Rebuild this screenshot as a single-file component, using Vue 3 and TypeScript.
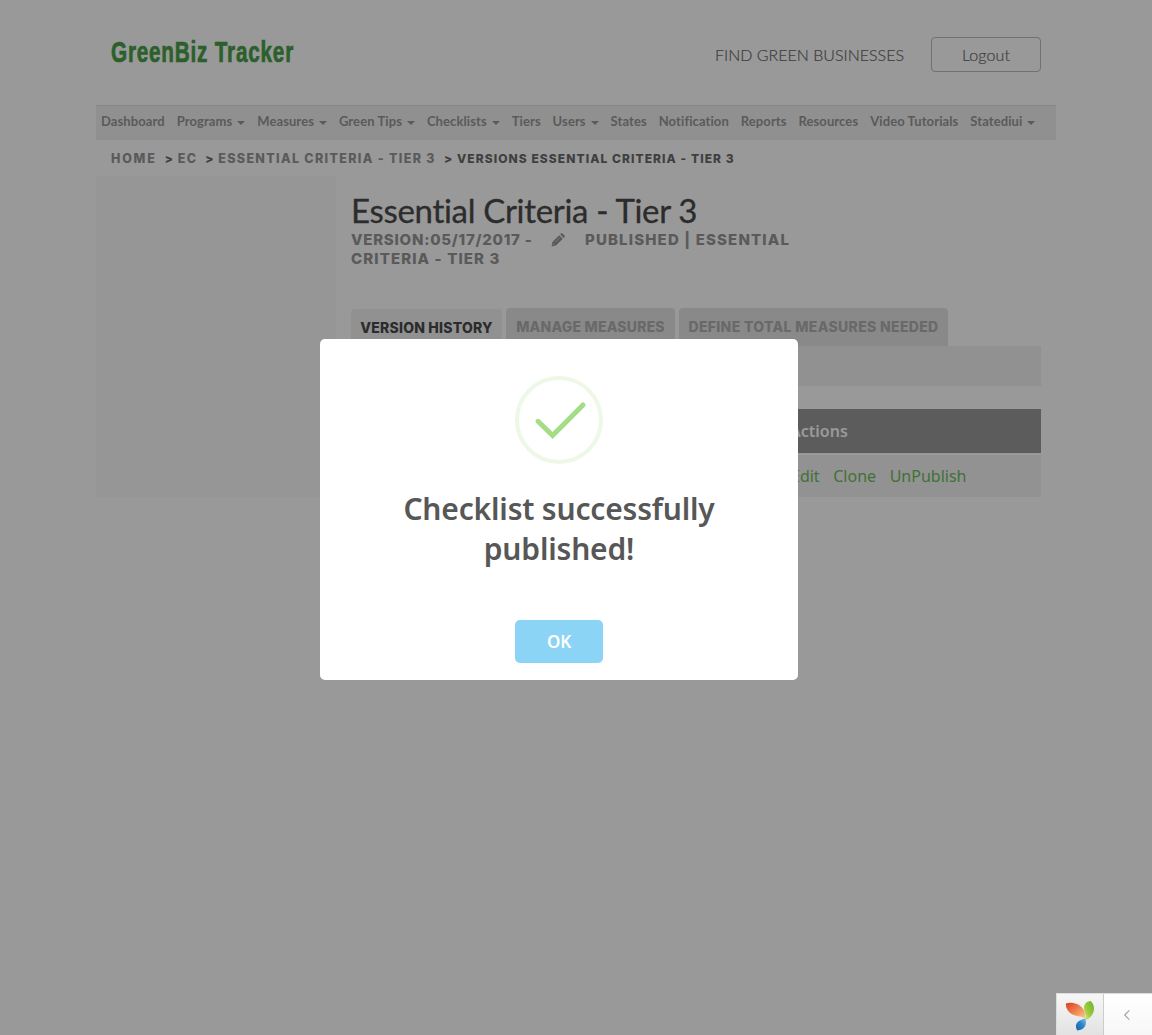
<script setup lang="ts">
interface NavItem {
  label: string
  menu?: boolean
}

const nav: NavItem[] = [
  { label: 'Dashboard' },
  { label: 'Programs', menu: true },
  { label: 'Measures', menu: true },
  { label: 'Green Tips', menu: true },
  { label: 'Checklists', menu: true },
  { label: 'Tiers' },
  { label: 'Users', menu: true },
  { label: 'States' },
  { label: 'Notification' },
  { label: 'Reports' },
  { label: 'Resources' },
  { label: 'Video Tutorials' },
  { label: 'Statediui', menu: true },
]

const crumbs: string[] = ['HOME', 'EC', 'ESSENTIAL CRITERIA - TIER 3']
const actions: string[] = ['Edit', 'Clone', 'UnPublish']
</script>

<template>
  <div class="page">
    <div class="container">
      <header class="header">
        <div class="logo"><span>GreenBiz Tracker</span></div>
        <div class="header-right">
          <a class="find">FIND GREEN BUSINESSES</a>
          <a class="logout">Logout</a>
        </div>
      </header>

      <nav class="nav">
        <a v-for="item in nav" :key="item.label" class="nav-item">
          {{ item.label }}<i v-if="item.menu" class="caret"></i>
        </a>
      </nav>

      <div class="crumbs">
        <template v-for="c in crumbs" :key="c">
          <a>{{ c }}</a><b>&gt;</b>
        </template>
        <strong>VERSIONS ESSENTIAL CRITERIA - TIER 3</strong>
      </div>

      <div class="columns">
        <aside class="side"></aside>
        <main class="main">
          <h1>Essential Criteria - Tier 3</h1>
          <div class="meta">
            <div class="meta-row">
              <span class="ver">VERSION:05/17/2017 -</span>
              <svg class="pencil" viewBox="0 0 14 14" width="14" height="14">
                <path fill="currentColor" d="M.6 13.4 1.4 9 8.2 2.2l3.6 3.6L5 12.6zM9.1 1.3l.9-.9q.7-.6 1.4 0l2.2 2.2q.6.7 0 1.4l-.9.9z" />
                <path d="M4.1 9.3 8.5 4.9M1.7 10.8l1.5 1.5" stroke="#fff" stroke-width=".5" />
              </svg>
              <span class="pub">PUBLISHED | ESSENTIAL</span>
            </div>
            <div class="meta-row second">CRITERIA - TIER 3</div>
          </div>
          <div class="tabs">
            <a class="tab active"><span>VERSION HISTORY</span></a>
            <a class="tab manage"><span>MANAGE MEASURES</span></a>
            <a class="tab define"><span>DEFINE TOTAL MEASURES NEEDED</span></a>
          </div>
          <div class="panel"></div>
          <div class="thead"><span>Actions</span></div>
          <div class="trow">
            <a v-for="a in actions" :key="a">{{ a }}</a>
          </div>
        </main>
      </div>
    </div>

    <div class="overlay"></div>

    <div class="modal">
      <svg class="check" viewBox="0 0 88 88" width="88" height="88">
        <circle cx="44" cy="44" r="42" fill="none" stroke="#edf8e7" stroke-width="4" />
        <path d="M23 45.3 37.6 59.5 68 29" fill="none" stroke="#a5dc86" stroke-width="5" stroke-linecap="round" />
      </svg>
      <h2>Checklist successfully<br />published!</h2>
      <button class="ok">OK</button>
    </div>

    <div class="debug">
      <div class="yii">
        <svg viewBox="0 0 30 32" width="30" height="32">
          <defs>
            <linearGradient id="yo" x1="0" y1="0" x2="1" y2="1">
              <stop offset="0" stop-color="#dc3b20" />
              <stop offset=".5" stop-color="#ee8452" />
              <stop offset="1" stop-color="#fbd58c" />
            </linearGradient>
            <linearGradient id="yg" x1="1" y1="0" x2="0" y2="1">
              <stop offset="0" stop-color="#68b22f" />
              <stop offset=".6" stop-color="#a0cc3d" />
              <stop offset="1" stop-color="#e6eda0" />
            </linearGradient>
            <linearGradient id="yb" x1="1" y1="0" x2="0" y2="1">
              <stop offset="0" stop-color="#7cc3ea" />
              <stop offset=".45" stop-color="#2c86cb" />
              <stop offset="1" stop-color="#1762a8" />
            </linearGradient>
          </defs>
          <path fill="url(#yg)" d="M25.8 1C31 6.5 30.2 15 21 20.3q.3-4.3-1.6-8.8C17.8 5.5 20.5 1.5 25.8 1Z" />
          <path fill="url(#yo)" d="M.9 3.6C5.5 1.6 14.5 2.8 18.5 9.5q2.2 4 2.2 9.8C17 15.6 12 16.8 7 14.2 2.5 11.5.6 7.5.9 3.6Z" />
          <path fill="url(#yb)" d="M20.6 18.6C22 24.5 20 30 12.2 30.6 8.2 23.5 14 19.8 20.6 18.6Z" />
        </svg>
      </div>
      <div class="toggle">
        <svg viewBox="0 0 8 12" width="8" height="12">
          <path d="M6.3 1.3 1.7 6l4.6 4.7" fill="none" stroke="#a0a0a0" stroke-width="1.1" />
        </svg>
      </div>
    </div>
  </div>
</template>

<style>
body {
  margin: 0;
  background: #fff;
}
</style>

<style scoped>
.page {
  position: relative;
  height: 1035px;
  overflow: hidden;
  font-family: Lato, sans-serif;
}
.container {
  width: 960px;
  margin: 0 auto;
}
.header {
  box-sizing: border-box;
  height: 105px;
  padding: 37px 15px 0;
  display: flex;
  justify-content: space-between;
}
.logo {
  width: 184px;
  height: 30px;
  color: #48a048;
  font: 700 30px/30px 'Liberation Sans', sans-serif;
  white-space: nowrap;
}
.logo span {
  display: inline-block;
  letter-spacing: 1.15px;
  transform: scaleX(0.69);
  transform-origin: 0 50%;
  -webkit-text-stroke: 0.7px #48a048;
}
.header-right {
  display: flex;
}
.find {
  font-weight: 300;
  font-size: 16px;
  line-height: 36px;
  color: #6a6a6a;
  margin-right: 27px;
  -webkit-text-stroke: 0.2px #6a6a6a;
}
.logout {
  box-sizing: border-box;
  width: 110px;
  height: 35px;
  border: 1px solid #bbb;
  border-radius: 4px;
  text-align: center;
  font-size: 16px;
  font-weight: 300;
  letter-spacing: 0.1px;
  line-height: 34px;
  color: #6a6a6a;
  -webkit-text-stroke: 0.2px #6a6a6a;
}
.nav {
  box-sizing: border-box;
  height: 35px;
  background: #f1f1f1;
  border-top: 1px solid #e2e2e2;
  display: flex;
  padding-left: 5px;
  gap: 11.9px;
}
.nav-item {
  font-weight: 700;
  font-size: 13px;
  line-height: 31px;
  letter-spacing: 0.1px;
  color: #979797;
  white-space: nowrap;
}
.caret {
  display: inline-block;
  margin-left: 5px;
  vertical-align: 1px;
  border: 4px solid transparent;
  border-top-color: #979797;
  border-bottom: 0;
}
.crumbs {
  height: 36px;
  padding-left: 15px;
  display: flex;
  font: 800 12.5px/37px Inter, sans-serif;
  letter-spacing: 1.33px;
  color: #979797;
  white-space: nowrap;
}
.crumbs a:first-child {
  letter-spacing: 1.8px;
}
.crumbs b {
  margin: 0 3.8px 0 8px;
  font-size: 12px;
  font-weight: 800;
  letter-spacing: 1px;
  color: #6a6a6a;
}
.crumbs strong {
  font-size: 12px;
  font-weight: 800;
  letter-spacing: 1.07px;
  color: #6a6a6a;
}
.columns {
  display: flex;
}
.side {
  width: 240px;
  height: 321px;
  background: #fafafa;
}
.main {
  width: 690px;
  margin-left: 15px;
}
h1 {
  margin: 14px 0 0;
  font-weight: 400;
  font-size: 33px;
  line-height: 40px;
  letter-spacing: -0.31px;
  font-variant-ligatures: none;
  color: #4a4a4a;
  white-space: nowrap;
  -webkit-text-stroke: 0.3px #4a4a4a;
}
.meta {
  height: 78px;
  font: 800 15px/19px Inter, sans-serif;
  letter-spacing: 1.1px;
  color: #979797;
}
.meta-row {
  display: flex;
  align-items: center;
  height: 19px;
  white-space: nowrap;
}
.ver {
  width: 200px;
  letter-spacing: 0.75px;
}
.pub {
  margin-left: 20px;
  letter-spacing: 1.15px;
}
.tabs {
  display: flex;
  align-items: flex-end;
  gap: 4px;
  height: 38px;
}
.tab {
  box-sizing: border-box;
  height: 38px;
  border-radius: 4px 4px 0 0;
  background: #e5e5e5;
  color: #b0b0b0;
  font: 800 14px/38px Inter, sans-serif;
  letter-spacing: 0.2px;
  text-align: center;
  white-space: nowrap;
}
.tab.active {
  width: 151px;
  height: 37px;
  background: #f2f2f2;
  color: #4a4a4a;
}
.tab.manage {
  width: 169px;
}
.tab.define {
  width: 269px;
  letter-spacing: 0.33px;
}
.panel {
  height: 40px;
  background: #f2f2f2;
}
.thead {
  margin-top: 23px;
  height: 44px;
  background: #999;
  color: #fff;
  font: 600 16px/44px 'Noto Sans', sans-serif;
  padding-left: 439px;
}
.trow {
  margin-top: 2px;
  height: 42px;
  background: #f4f4f4;
  display: flex;
  gap: 13.6px;
  padding-left: 440px;
  font: 400 16px/42px 'Noto Sans', sans-serif;
  color: #6cbd5b;
}
.overlay {
  position: absolute;
  inset: 0;
  background: rgba(0, 0, 0, 0.4);
}
.modal {
  position: absolute;
  left: 320px;
  top: 339px;
  box-sizing: border-box;
  width: 478px;
  height: 341px;
  padding-top: 37px;
  border-radius: 5px;
  background: #fff;
  display: flex;
  flex-direction: column;
  align-items: center;
}
.modal h2 {
  margin: 25px 0 0;
  color: #575757;
  font: 600 30px/40px 'Noto Sans', sans-serif;
  letter-spacing: -0.18px;
  text-align: center;
  white-space: nowrap;
}
.ok {
  margin-top: 51px;
  width: 88px;
  height: 43px;
  padding: 0;
  border: 0;
  border-radius: 5px;
  background: #8cd4f5;
  color: #fff;
  font: 600 17px/43px 'Noto Sans', sans-serif;
  letter-spacing: -0.2px;
}
.debug {
  position: absolute;
  right: 0;
  bottom: 0;
  box-sizing: border-box;
  width: 96px;
  height: 42px;
  border: 1px solid #ddd;
  border-bottom: 0;
  border-right: 0;
  display: flex;
  background: #fff;
}
.yii {
  width: 46px;
  border-right: 1px solid #ccc;
  background: linear-gradient(#f7f7f7, #e2e2e2);
  display: flex;
  justify-content: center;
  padding-top: 6px;
}
.toggle {
  flex: 1;
  background: linear-gradient(#fff, #f7f7f7);
  display: flex;
  align-items: center;
  justify-content: center;
  padding-right: 2px;
}
</style>
